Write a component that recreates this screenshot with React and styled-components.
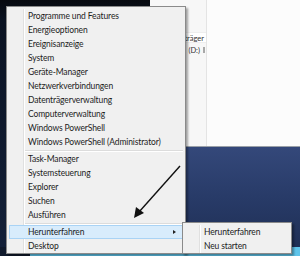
import styled, { createGlobalStyle } from 'styled-components'

const Global = createGlobalStyle`
  html, body { margin: 0; padding: 0; background: #0c1424; }
  * { box-sizing: border-box; }
`

const Screen = styled.div`
  position: relative;
  width: 300px;
  height: 256px;
  overflow: hidden;
  display: grid;
  grid-template-columns: 150px 1fr;
  grid-template-rows: 147px 1fr 9px;
  font-family: Lato, "Open Sans", sans-serif;
  background: linear-gradient(180deg, #07090f 0px, #0b1322 20px, #14213a 256px);
`

const Explorer = styled.div`
  grid-column: 2;
  grid-row: 1;
  display: flex;
  background: #fcfcfc;
  border-bottom: 1px solid #9aa0a8;
`

const NavPane = styled.div`
  width: 57px;
  background: #f7f7f7;
  border-right: 1px solid #e4e4e4;
  padding-top: 32px;
  font-size: 7.5px;
  color: #333;
  text-align: right;
`

const Header = styled.div`
  height: 11px;
  line-height: 11px;
  padding-right: 2px;
  background: #fff;
  border-top: 1px solid #eee;
  border-bottom: 1px solid #eee;
`

const DriveRow = styled.div`
  display: flex;
  justify-content: flex-end;
  align-items: center;
  gap: 3px;
  height: 14px;
  padding-right: 1px;
`

const Bar = styled.span`
  width: 2px;
  height: 6px;
  background: #a8a8a8;
`

const Content = styled.div`
  flex: 1;
`

const Wallpaper = styled.div`
  grid-column: 2;
  grid-row: 2;
  background: linear-gradient(180deg, #34487a 0%, #283b68 50%, #1f2f55 100%);
`

const Taskbar = styled.div`
  grid-column: 1 / 3;
  grid-row: 3;
  display: flex;
  background: #5fc4ea;
`

const StartArea = styled.div`
  width: 30px;
  background: #101a2c;
`

const Menu = styled.div`
  position: absolute;
  left: ${p => p.x}px;
  top: ${p => p.y}px;
  width: ${p => p.w}px;
  padding: 2px 2px 0 2px;
  background: #f0f0f0;
  border: 1px solid #8a8a8a;
  box-shadow: 2px 2px 2px rgba(0, 0, 0, 0.35);
`

const Gutter = styled.div`
  position: absolute;
  top: 2px;
  bottom: 0;
  left: ${p => p.at}px;
  width: 2px;
  border-left: 1px solid #e0e0e0;
  border-right: 1px solid #fff;
`

const Item = styled.div`
  position: relative;
  display: flex;
  align-items: center;
  justify-content: space-between;
  height: 14px;
  padding-left: ${p => p.indent}px;
  padding-right: 6px;
  font-size: 8.5px;
  letter-spacing: -0.12px;
  color: #1c1c1c;
  white-space: nowrap;
  border: 1px solid ${p => (p.active ? '#a9d3f5' : 'transparent')};
  background: ${p => (p.active ? '#d8ecfc' : 'transparent')};
`

const Separator = styled.div`
  height: 2px;
  margin-top: 1px;
  margin-left: 15px;
  border-top: 1px solid #dcdcdc;
  border-bottom: 1px solid #fff;
`

const SubArrow = styled.span`
  width: 0;
  height: 0;
  border-top: 2.5px solid transparent;
  border-bottom: 2.5px solid transparent;
  border-left: 3px solid #222;
`

const Annotation = styled.svg`
  position: absolute;
  left: 0;
  top: 0;
  pointer-events: none;
`

const groups = [
  ['Programme und Features', 'Energieoptionen', 'Ereignisanzeige', 'System', 'Geräte-Manager',
    'Netzwerkverbindungen', 'Datenträgerverwaltung', 'Computerverwaltung', 'Windows PowerShell',
    'Windows PowerShell (Administrator)'],
  ['Task-Manager', 'Systemsteuerung', 'Explorer', 'Suchen', 'Ausführen'],
  ['Herunterfahren', 'Desktop']
]

export default function App () {
  return (
    <>
      <Global />
      <Screen>
        <Explorer>
          <NavPane>
            <Header>Datenträger</Header>
            <DriveRow>(D:) <Bar /></DriveRow>
          </NavPane>
          <Content />
        </Explorer>
        <Wallpaper />
        <Taskbar>
          <StartArea />
        </Taskbar>

        <Menu x={6} y={6} w={180}>
          <Gutter at={16} />
          {groups.map((group, gi) => (
            <div key={gi}>
              {gi > 0 && <Separator />}
              {group.map(label => (
                <Item key={label} indent={18} active={label === 'Herunterfahren'}>
                  {label}
                  {label === 'Herunterfahren' && <SubArrow />}
                </Item>
              ))}
            </div>
          ))}
        </Menu>

        <Menu x={182} y={222} w={110}>
          <Gutter at={16} />
          <Item indent={18}>Herunterfahren</Item>
          <Item indent={18}>Neu starten</Item>
        </Menu>

        <Annotation width="300" height="256" viewBox="0 0 300 256">
          <line x1="180" y1="166" x2="139" y2="212" stroke="#111" strokeWidth="1.4" />
          <polygon points="134,218 136,207 144,213" fill="#111" />
        </Annotation>
      </Screen>
    </>
  )
}
